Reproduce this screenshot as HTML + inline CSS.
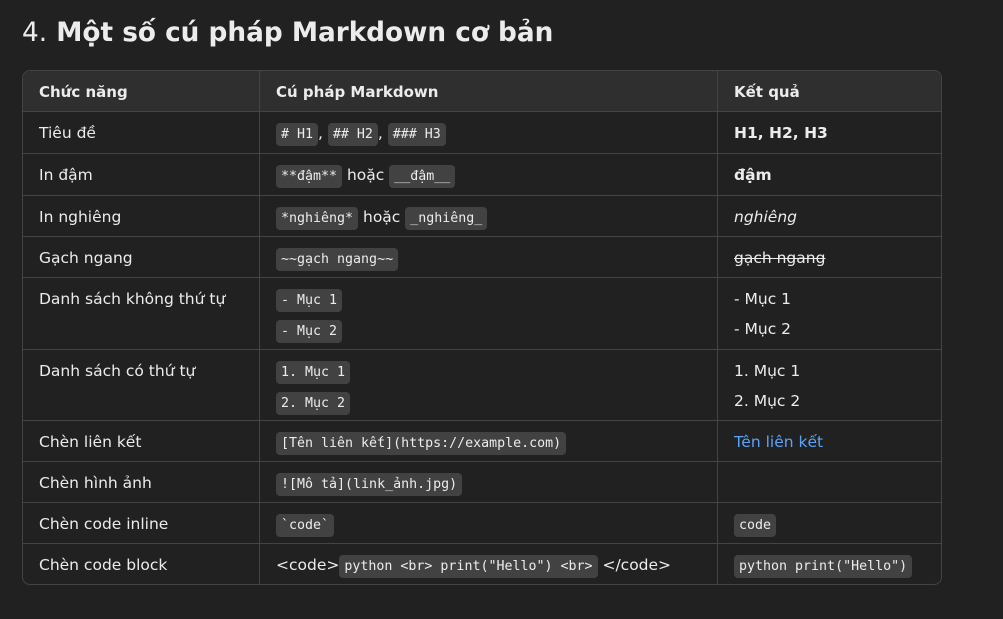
<!DOCTYPE html>
<html><head><meta charset="utf-8"><style>
body{margin:0;background:#212121;color:#ececec;font-family:"DejaVu Sans","Liberation Sans",sans-serif;width:1003px;height:619px;overflow:hidden}
h2{position:absolute;left:22px;top:13px;margin:0;font-size:26.3px;line-height:40px;font-weight:bold}
h2 span{font-weight:normal}
.t{position:absolute;left:22px;top:70px;width:918px;border:1px solid #444;border-radius:8px;overflow:hidden}
.r{display:flex;border-top:1px solid #444;box-sizing:border-box}
.r:first-child{background:#2f2f2f;border-top:none}
.r:first-child .c{font-weight:bold;font-size:15px}
.c{padding:11px 16px 0;box-sizing:border-box;font-size:15.5px;line-height:20px}
.c1{width:237px;border-right:1px solid #444}
.c2{width:458px;border-right:1px solid #444}
.c3{flex:1}
code{font-family:"DejaVu Sans Mono","Liberation Mono",monospace;font-size:13.3px;background:#424242;border-radius:4px;padding:3px 5px;display:inline-block;line-height:17px}
.l{margin-bottom:8px}
a{color:#5ba4f5;text-decoration:none}
</style></head><body>
<h2><span>4.</span> Một số cú pháp Markdown cơ bản</h2>
<div class="t">
<div class="r" style="height:40px"><div class="c c1">Chức năng</div><div class="c c2">Cú pháp Markdown</div><div class="c c3">Kết quả</div></div>
<div class="r" style="height:42px"><div class="c c1">Tiêu đề</div><div class="c c2"><code># H1</code>, <code>## H2</code>, <code>### H3</code></div><div class="c c3"><b>H1, H2, H3</b></div></div>
<div class="r" style="height:42px"><div class="c c1">In đậm</div><div class="c c2"><code>**đậm**</code> hoặc <code>__đậm__</code></div><div class="c c3"><b>đậm</b></div></div>
<div class="r" style="height:41px"><div class="c c1">In nghiêng</div><div class="c c2"><code>*nghiêng*</code> hoặc <code>_nghiêng_</code></div><div class="c c3"><i>nghiêng</i></div></div>
<div class="r" style="height:41px"><div class="c c1">Gạch ngang</div><div class="c c2"><code>~~gạch ngang~~</code></div><div class="c c3"><s>gạch ngang</s></div></div>
<div class="r" style="height:72px"><div class="c c1">Danh sách không thứ tự</div><div class="c c2"><div class="l"><code>- Mục 1</code></div><div><code>- Mục 2</code></div></div><div class="c c3"><div style="margin-bottom:10px">- Mục 1</div><div>- Mục 2</div></div></div>
<div class="r" style="height:71px"><div class="c c1">Danh sách có thứ tự</div><div class="c c2"><div class="l"><code>1. Mục 1</code></div><div><code>2. Mục 2</code></div></div><div class="c c3"><div style="margin-bottom:10px">1. Mục 1</div><div>2. Mục 2</div></div></div>
<div class="r" style="height:41px"><div class="c c1">Chèn liên kết</div><div class="c c2"><code>[Tên liên kết](https://example.com)</code></div><div class="c c3"><a>Tên liên kết</a></div></div>
<div class="r" style="height:41px"><div class="c c1">Chèn hình ảnh</div><div class="c c2"><code>![Mô tả](link_ảnh.jpg)</code></div><div class="c c3"></div></div>
<div class="r" style="height:41px"><div class="c c1">Chèn code inline</div><div class="c c2"><code>`code`</code></div><div class="c c3"><code>code</code></div></div>
<div class="r" style="height:41px"><div class="c c1">Chèn code block</div><div class="c c2">&lt;code&gt;<code>python &lt;br&gt; print("Hello") &lt;br&gt; </code> &lt;/code&gt;</div><div class="c c3"><code>python print("Hello")</code></div></div>
</div>
</body></html>
